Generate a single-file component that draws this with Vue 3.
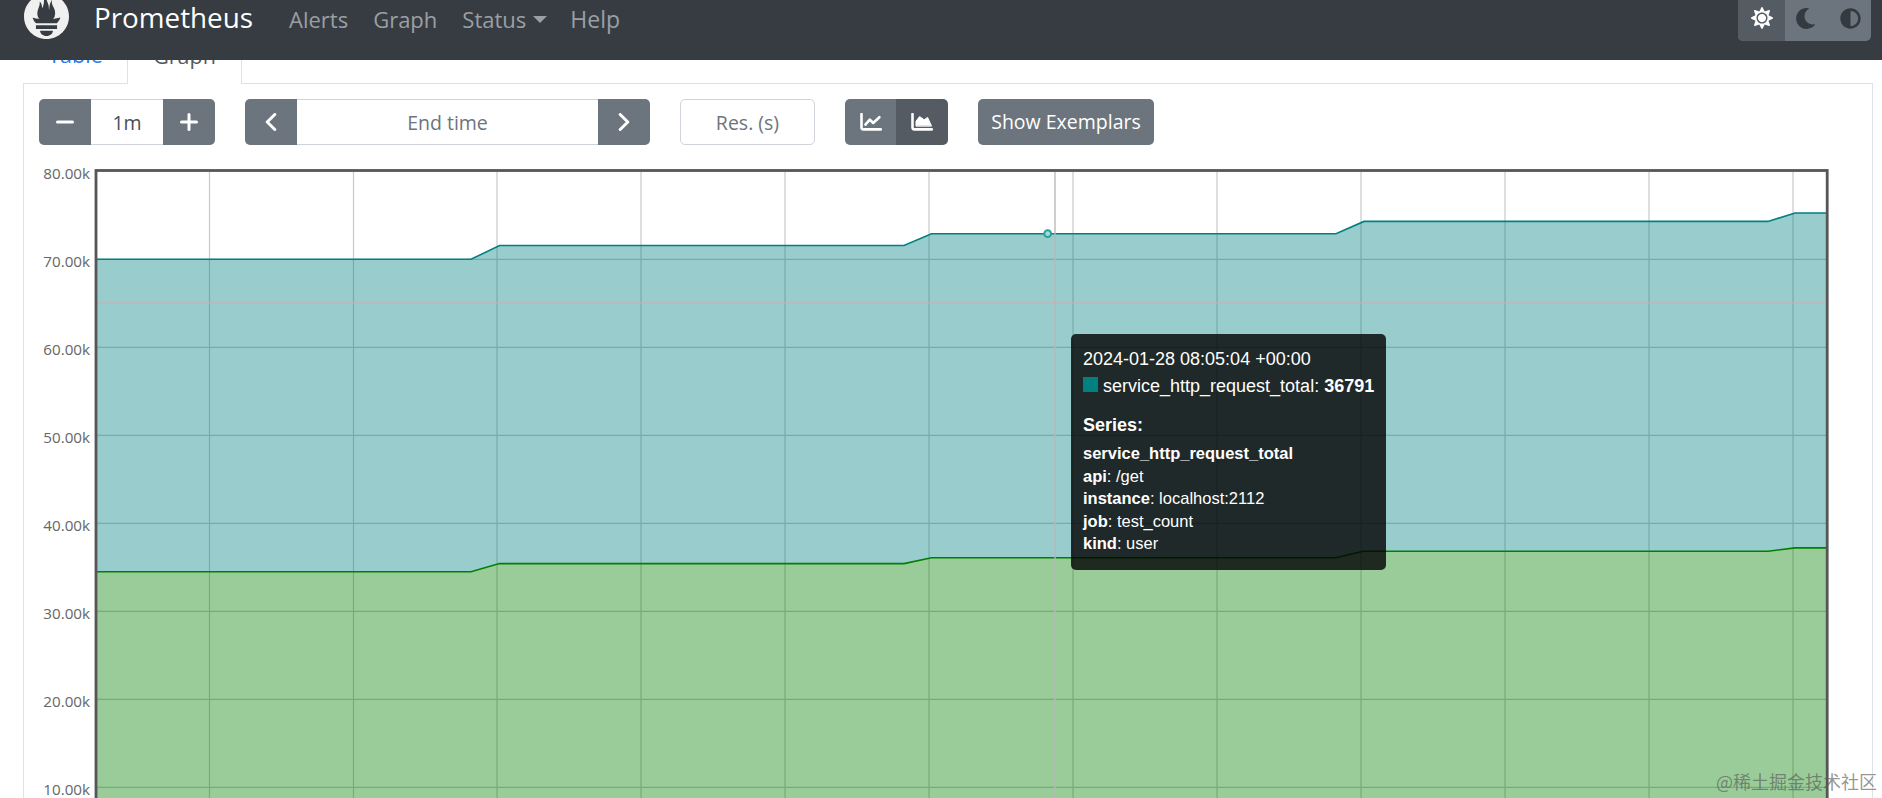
<script setup>
const gridY = (v) => 787.3 - (v - 10) * 8.8
const yTicks = [80, 70, 60, 50, 40, 30, 20, 10].map((v) => ({
  label: v + '.00k',
  y: gridY(v),
}))
const xGrid = [209.5, 353.5, 497, 641, 785, 929, 1073, 1217, 1361, 1505, 1649, 1793]
const L = 97
const R = 1826
const B = 860
const teal = [[L, 259.3], [471, 259.3], [499.5, 245.5], [904, 245.5], [931.5, 233.8], [1336, 233.8], [1364, 221.4], [1768, 221.4], [1795, 213], [R, 213]]
const green = [[L, 571.7], [471, 571.7], [499.5, 563.6], [904, 563.6], [931.5, 557.8], [1336, 557.8], [1363, 551.3], [1768, 551.3], [1795, 547.9], [R, 547.9]]
const line = (p) => p.map((q) => q.join(',')).join(' ')
const greenArea = line(green) + ` ${R},${B} ${L},${B}`
const tealArea = line(teal) + ' ' + line([...green].reverse())
const labels = [
  ['api', '/get'],
  ['instance', 'localhost:2112'],
  ['job', 'test_count'],
  ['kind', 'user'],
]
</script>

<template>
  <div class="page">
    <nav class="navbar">
      <svg class="logo" viewBox="0 0 24 24"><path fill="#f0f0f0" d="M12 0C5.373 0 0 5.372 0 12c0 6.627 5.373 12 12 12s12-5.373 12-12c0-6.628-5.373-12-12-12zm0 22.46c-1.885 0-3.414-1.26-3.414-2.814h6.828c0 1.553-1.528 2.813-3.414 2.813zm5.64-3.745H6.36v-2.046h11.28v2.046zm-.04-3.1H6.391c-.037-.043-.075-.085-.111-.128-1.155-1.401-1.427-2.133-1.69-2.879-.005-.025 1.4.287 2.395.511 0 0 .513.119 1.262.255-.72-.843-1.147-1.915-1.147-3.01 0-2.406 1.845-4.508 1.18-6.207.648.053 1.34 1.367 1.387 3.422.689-.951.977-2.69.977-3.755 0-1.103.727-2.385 1.454-2.429-.648 1.069.168 1.984.894 4.256.272.854.237 2.29.447 3.201.07-1.892.395-4.652 1.595-5.605-.529 1.2.079 2.702.494 3.424.671 1.164 1.078 2.047 1.078 3.716a4.642 4.642 0 0 1-1.11 2.996c.792-.149 1.34-.283 1.34-.283l2.573-.502s-.374 1.538-1.81 3.017z"/></svg>
      <span class="brand">Prometheus</span>
      <span class="link alerts">Alerts</span>
      <span class="link graph">Graph</span>
      <span class="link status">Status<i class="caret"></i></span>
      <span class="link help">Help</span>
      <div class="theme">
        <span class="theme-btn active">
          <svg class="sun" viewBox="0 0 512 512"><path fill="#fff" d="M256 160c-52.9 0-96 43.1-96 96s43.1 96 96 96 96-43.1 96-96-43.1-96-96-96zm246.4 80.5l-94.7-47.3 33.5-100.4c4.5-13.6-8.4-26.5-21.9-21.9l-100.4 33.5-47.4-94.8c-6.4-12.8-24.6-12.8-31 0l-47.3 94.7L92.7 70.8c-13.6-4.5-26.5 8.4-21.9 21.9l33.5 100.4-94.7 47.4c-12.8 6.4-12.8 24.6 0 31l94.7 47.3-33.5 100.5c-4.5 13.6 8.4 26.5 21.9 21.9l100.4-33.5 47.3 94.7c6.4 12.8 24.6 12.8 31 0l47.3-94.7 100.4 33.5c13.6 4.5 26.5-8.4 21.9-21.9l-33.5-100.4 94.7-47.3c13-6.5 13-24.7.2-31.1zm-155.9 106c-49.9 49.9-131.1 49.9-181 0-49.9-49.9-49.9-131.1 0-181 49.9-49.9 131.1-49.9 181 0 49.9 49.9 49.9 131.1 0 181z"/></svg>
        </span>
        <span class="theme-btn">
          <svg class="moon" viewBox="0 0 512 512"><path fill="#343a40" d="M283.211 512c78.962 0 151.079-35.925 198.857-94.792 7.068-8.708-.639-21.43-11.562-19.35-124.203 23.654-238.262-71.576-238.262-196.954 0-72.222 38.662-138.635 101.498-174.394 9.686-5.512 7.25-20.197-3.756-22.23A258.156 258.156 0 0 0 283.211 0c-141.309 0-256 114.511-256 256 0 141.309 114.511 256 256 256z"/></svg>
        </span>
        <span class="theme-btn">
          <svg class="half" viewBox="0 0 512 512"><path fill="#343a40" d="M8 256c0 136.966 111.033 248 248 248s248-111.034 248-248S392.966 8 256 8 8 119.033 8 256zm248 184V72c101.705 0 184 82.311 184 184 0 101.705-82.311 184-184 184z"/></svg>
        </span>
      </div>
    </nav>

    <div class="tabs">
      <span class="tab">Table</span>
      <span class="tab active">Graph</span>
    </div>

    <section class="panel">
      <div class="controls">
        <div class="group range">
          <span class="btn square">
            <svg class="ico" viewBox="0 0 18 18"><path d="M1.5 9H16.5" /></svg>
          </span>
          <span class="field value">1m</span>
          <span class="btn square">
            <svg class="ico" viewBox="0 0 18 18"><path d="M1.5 9H16.5M9 1.5V16.5" /></svg>
          </span>
        </div>
        <div class="group endtime">
          <span class="btn square">
            <svg class="ico" viewBox="0 0 18 18"><path d="M12.8 1.5L5.2 9L12.8 16.5" /></svg>
          </span>
          <span class="field placeholder grow">End time</span>
          <span class="btn square">
            <svg class="ico" viewBox="0 0 18 18"><path d="M5.2 1.5L12.8 9L5.2 16.5" /></svg>
          </span>
        </div>
        <span class="res">Res. (s)</span>
        <div class="group types">
          <span class="btn type">
            <svg class="ico-type" viewBox="0 0 22 18">
              <path d="M1.5 1V14.6Q1.5 16.4 3.3 16.4H20.8" />
              <path d="M5.4 11.6L9.8 6.6L13.2 10L19.4 4.2" />
            </svg>
          </span>
          <span class="btn type dark">
            <svg class="ico-type" viewBox="0 0 22 18">
              <path d="M1.5 1V14.6Q1.5 16.4 3.3 16.4H20.8" />
              <path class="mound" d="M5 12.8V8.2L8.6 3.6L13.2 6.8L16.6 4.4L20.4 12.8Z" />
            </svg>
          </span>
        </div>
        <span class="exemplars">Show Exemplars</span>
      </div>

      <div class="chart">
        <div class="ylabel" v-for="t in yTicks" :key="t.label" :style="{ top: t.y + 1.5 - 169 + 'px' }">{{ t.label }}</div>
        <svg class="plot" viewBox="94 169 1736 640" width="1736" height="640">
          <g class="grid">
            <line v-for="x in xGrid" :key="x" :x1="x" :x2="x" y1="172" y2="860" />
            <line v-for="t in yTicks.slice(1)" :key="t.y" x1="97" x2="1826" :y1="t.y" :y2="t.y" />
          </g>
          <polygon :points="tealArea" fill="#008080" fill-opacity="0.4" />
          <polygon :points="greenArea" fill="#008000" fill-opacity="0.4" />
          <polyline :points="line(teal)" fill="none" stroke="#008080" stroke-width="1.6" />
          <polyline :points="line(green)" fill="none" stroke="#008000" stroke-width="1.6" />
          <line class="cross" x1="1055" x2="1055" y1="172" y2="860" />
          <line class="cross" x1="97" x2="1826" y1="302.7" y2="302.7" />
          <circle cx="1047.7" cy="233.7" r="3.4" fill="#a4dbd6" stroke="#2ba09a" stroke-width="2" />
          <rect x="96" y="170.5" width="1731.2" height="800" fill="none" stroke="#565656" stroke-width="2.8" />
        </svg>
        <div class="tooltip">
          <div class="time">2024-01-28 08:05:04 +00:00</div>
          <div class="val"><i class="swatch"></i>service_http_request_total: <b>36791</b></div>
          <div class="series">Series:</div>
          <div class="meta"><b>service_http_request_total</b></div>
          <div class="meta" v-for="l in labels" :key="l[0]"><b>{{ l[0] }}</b>: {{ l[1] }}</div>
        </div>
      </div>
    </section>

    <div class="watermark">@稀土掘金技术社区</div>
  </div>
</template>

<style>
html, body { margin: 0; overflow: hidden; background: #fff; }
</style>

<style scoped>
.page {
  position: relative;
  height: 798px;
  overflow: hidden;
  background: #fff;
  font-family: "Open Sans", "Liberation Sans", sans-serif;
}
.navbar {
  position: relative;
  z-index: 2;
  height: 60px;
  background: #373c42;
  display: flex;
  align-items: flex-start;
  padding-left: 24px;
  overflow: hidden;
}
.logo { width: 45px; height: 45px; margin-top: -6px; flex: none; }
.brand { margin-left: 25px; font-size: 27.8px; line-height: 35px; color: #fff; }
.link { font-size: 22px; line-height: 38px; color: #9b9fa2; }
.alerts { margin-left: 36px; }
.graph { margin-left: 25px; }
.status { margin-left: 25px; display: flex; align-items: center; }
.help { margin-left: 23px; font-size: 23px; }
.caret {
  margin-left: 7px;
  border-top: 7px solid #9b9fa2;
  border-left: 7px solid transparent;
  border-right: 7px solid transparent;
}
.theme {
  margin-left: auto;
  margin-right: 11px;
  height: 41px;
  width: 133px;
  display: flex;
  background: #6c757d;
  border-radius: 0 0 5px 5px;
  overflow: hidden;
}
.theme-btn { flex: 1; display: flex; align-items: center; justify-content: center; padding-bottom: 5px; box-sizing: border-box; }
.theme-btn.active { flex: none; width: 47px; background: #545b62; }
.sun { width: 22px; height: 22px; }
.moon { width: 21px; height: 21px; margin-left: -3px; }
.half { width: 21px; height: 21px; margin-left: 2px; }

.tabs {
  display: flex;
  height: 83px;
  margin-top: -60px;
  padding-left: 24px;
  align-items: flex-end;
  box-sizing: border-box;
}
.tab {
  box-sizing: border-box;
  height: 46px;
  width: 103px;
  padding-top: 3px;
  font-size: 21.5px;
  line-height: 30px;
  text-align: center;
  color: #2a7ae2;
}
.tab.active {
  width: 115px;
  color: #555b61;
  background: #fff;
  border: 1px solid #dee2e6;
  border-bottom: 0;
  position: relative;
  z-index: 1;
  height: 47px;
  margin-bottom: -1px;
}
.panel {
  box-sizing: border-box;
  margin-left: 23px;
  width: 1850px;
  height: 760px;
  border: 1px solid #dee2e6;
  padding: 15px 15px 0;
}
.controls { display: flex; height: 46px; }
.group { display: flex; border-radius: 5px; overflow: hidden; height: 46px; }
.range { width: 176px; }
.endtime { width: 405px; margin-left: 30px; }
.types { width: 103px; margin-left: 30px; }
.btn {
  background: #6c757d;
  display: flex;
  align-items: center;
  justify-content: center;
  flex: none;
}
.square { width: 52px; }
.type { width: 51px; }
.type + .type { width: 52px; }
.dark { background: #545b62; }
.ico { width: 18px; height: 18px; }
.ico path { fill: none; stroke: #fff; stroke-width: 3; stroke-linecap: round; stroke-linejoin: round; }
.ico-type { width: 22px; height: 18px; }
.ico-type path { fill: none; stroke: #fff; stroke-width: 2.6; stroke-linecap: round; stroke-linejoin: round; }
.ico-type .mound { fill: #fff; stroke-width: 1; }
.field {
  box-sizing: border-box;
  flex: 1;
  border-top: 1px solid #ced4da;
  border-bottom: 1px solid #ced4da;
  font-size: 19.5px;
  line-height: 46px;
  text-align: center;
}
.value { color: #495057; }
.placeholder { color: #6c757d; }
.res {
  box-sizing: border-box;
  width: 135px;
  height: 46px;
  margin-left: 30px;
  border: 1px solid #ced4da;
  border-radius: 5px;
  font-size: 19.5px;
  line-height: 46px;
  text-align: center;
  color: #6c757d;
}
.exemplars {
  box-sizing: border-box;
  width: 176px;
  height: 46px;
  margin-left: 30px;
  background: #6c757d;
  border-radius: 5px;
  font-size: 19.5px;
  line-height: 46px;
  text-align: center;
  color: #fff;
}
.chart {
  position: relative;
  height: 640px;
  margin: 24px 0 0 -39px;
}
.plot {
  position: absolute;
  left: 94px;
  top: 0;
  display: block;
}
.grid line { stroke: #c8c8c8; stroke-width: 1.2; }
.cross { stroke: #b8b8b8; stroke-opacity: 0.9; stroke-width: 1.5; }
.ylabel {
  position: absolute;
  left: 0;
  width: 90px;
  text-align: right;
  transform: translateY(-50%);
  font-size: 15.2px;
  line-height: 20px;
  color: #666;
  white-space: nowrap;
}
.tooltip {
  position: absolute;
  left: 1071px;
  top: 165px;
  box-sizing: border-box;
  width: 315px;
  height: 236px;
  padding: 12px;
  border-radius: 5px;
  background: rgba(0, 0, 0, 0.8);
  color: #fff;
  font-family: "Liberation Sans", Arial, sans-serif;
  white-space: nowrap;
}
.time { font-size: 18px; line-height: 26px; }
.val { display: flex; font-size: 18px; line-height: 26px; margin-top: 1px; white-space: pre; }
.val b { font-weight: 700; }
.swatch { width: 15px; height: 15px; margin: 4px 5px 0 0; background: #008080; flex: none; }
.series { font-size: 18px; font-weight: 700; line-height: 26px; margin-top: 13px; margin-bottom: 4px; }
.meta { font-size: 16.5px; line-height: 22.5px; }
.watermark {
  position: absolute;
  left: 1716px;
  top: 769px;
  z-index: 3;
  font-family: "Noto Sans CJK SC", "Liberation Serif", serif;
  font-size: 18px;
  line-height: 24px;
  color: rgba(90, 90, 90, 0.65);
  white-space: nowrap;
}
</style>
